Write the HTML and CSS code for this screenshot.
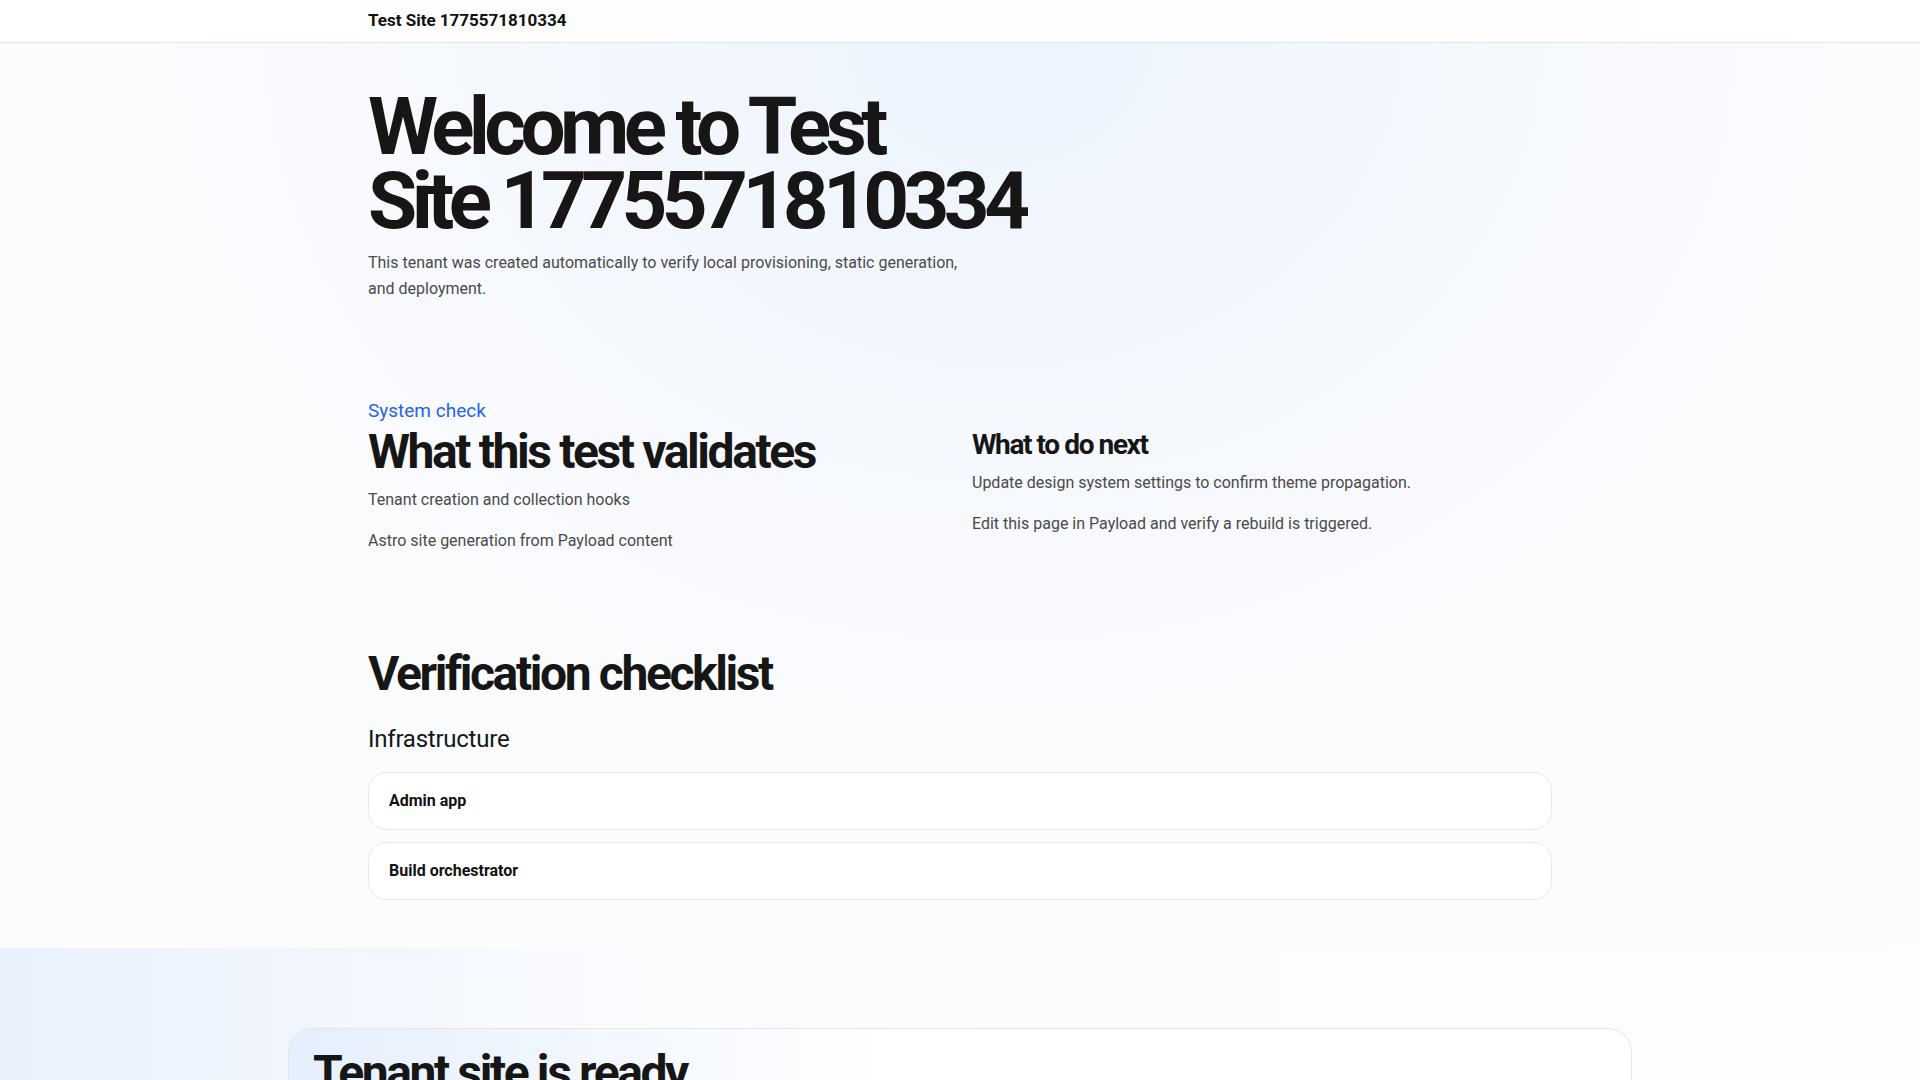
FILE: index.html
```html
<!DOCTYPE html>
<html lang="en">
<head>
    <meta charset="UTF-8">
    <meta name="viewport" content="width=device-width, initial-scale=1.0">
    <title>Test Site 1775571810334</title>
    <link rel="stylesheet" href="styles.css">
</head>
<body>
    <header class="site-header">
        <div class="container">
            <a href="/" class="site-name">Test Site 1775571810334</a>
        </div>
    </header>

    <main class="page">
        <section class="hero">
            <div class="container">
                <h1>Welcome to Test Site 1775571810334</h1>
                <p class="lead">This tenant was created automatically to verify local provisioning, static generation, and deployment.</p>
            </div>
        </section>

        <section class="section">
            <div class="container two-col">
                <div>
                    <p class="eyebrow">System check</p>
                    <h2>What this test validates</h2>
                    <p>Tenant creation and collection hooks</p>
                    <p>Astro site generation from Payload content</p>
                </div>
                <div class="next-steps">
                    <h3>What to do next</h3>
                    <p>Update design system settings to confirm theme propagation.</p>
                    <p>Edit this page in Payload and verify a rebuild is triggered.</p>
                </div>
            </div>
        </section>

        <section class="section checklist">
            <div class="container">
                <h2 class="checklist-title">Verification checklist</h2>
                <h4 class="group-title">Infrastructure</h4>
                <div class="check-list">
                    <div class="check-item">Admin app</div>
                    <div class="check-item">Build orchestrator</div>
                </div>
            </div>
        </section>

        <section class="cta">
            <div class="cta-card">
                <h2>Tenant site is ready</h2>
            </div>
        </section>
    </main>
</body>
</html>
```

FILE: styles.css
```css
* {
    box-sizing: border-box;
}
body {
    font-family: Roboto, "Noto Sans", Arial, sans-serif;
    margin: 0;
    color: #161616;
    background: radial-gradient(ellipse 1100px 900px at 1000px 40px, #edf4fe 0%, #f5f8fd 45%, #fbfcfe 80%) #fbfcfe;
    line-height: 1.6;
}
.container {
    max-width: 1184px;
    margin: 0 auto;
}
.site-header {
    height: 43px;
    border-bottom: 1px solid #e3e5e8;
    background: rgba(255,255,255,0.85);
    display: flex;
    align-items: center;
}
.site-header .container {
    width: 1184px;
}
.site-name {
    font-weight: 700;
    font-size: 17px;
    color: #111;
    text-decoration: none;
}
h1, h2, h3 {
    margin: 0;
    font-weight: 700;
    color: #161616;
}
p {
    margin: 0 0 16px;
    font-size: 16px;
    color: #4a4a4a;
}
p:last-child {
    margin-bottom: 0;
}
.hero {
    padding: 48px 0;
}
.hero h1 {
    font-size: 80px;
    line-height: 0.92;
    letter-spacing: -0.07em;
    max-width: 720px;
    text-wrap: balance;
    margin-bottom: 12px;
}
.lead {
    max-width: 600px;
}
.section {
    padding: 48px 0;
}
.checklist {
    padding-top: 46px;
}
.two-col {
    display: grid;
    grid-template-columns: 1fr 1fr;
    gap: 24px;
    align-items: center;
}
.next-steps {
    padding-top: 14px;
}
.eyebrow {
    color: #2563eb;
    font-size: 19px;
    line-height: 1.5;
    margin: 0;
}
h2 {
    font-size: 48px;
    line-height: 1.1;
    letter-spacing: -0.05em;
    margin-bottom: 8px;
}
h3 {
    font-size: 28px;
    line-height: 1.2;
    letter-spacing: -0.05em;
    margin-bottom: 8px;
}
.checklist-title {
    margin-bottom: 20px;
}
.group-title {
    font-size: 24px;
    font-weight: 400;
    line-height: 1.5;
    margin: 0 0 15px;
    letter-spacing: -0.01em;
}
.check-list {
    display: flex;
    flex-direction: column;
    gap: 12px;
}
.check-item {
    background: #fff;
    border: 1px solid #e8e9ec;
    border-radius: 18px;
    padding: 16px 20px;
    font-weight: 700;
    font-size: 16px;
    line-height: 1.5;
    color: #111;
}
.cta {
    padding: 80px 0 40px;
    background: linear-gradient(90deg, #e9f1fd 0%, #fbfcfe 35%, #fdfdfe 100%);
}
.cta-card {
    max-width: 1344px;
    margin: 0 auto;
    border: 1px solid #e4e6ea;
    border-radius: 24px;
    padding: 20px 24px 40px;
    background: linear-gradient(90deg, #e5effd 0%, #f4f8fe 25%, #ffffff 45%);
}
.cta-card h2 {
    line-height: 1;
}
```
